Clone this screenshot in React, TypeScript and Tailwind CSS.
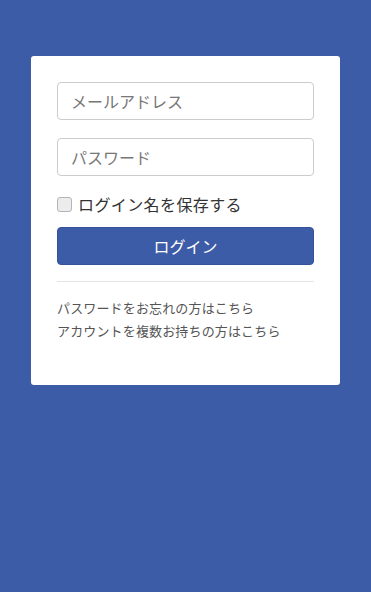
import React from "react";

export default function App() {
  return (
    <div
      className="min-h-[592px] w-full bg-[#3c5ca8] pt-[56px] px-[31px]"
      style={{ fontFamily: '"Noto Sans CJK JP", "Noto Sans", sans-serif' }}
    >
      <div className="bg-white rounded-[3px] px-[26px] pt-[26px] pb-[43px]">
        <div className="flex h-[38px] items-center rounded-[4px] border border-[#cccccc] px-[13px] text-[16px] text-[#777]">
          メールアドレス
        </div>
        <div className="mt-[18px] flex h-[38px] items-center rounded-[4px] border border-[#cccccc] px-[13px] text-[16px] text-[#777]">
          パスワード
        </div>
        <div className="mt-[16px] flex items-center gap-[6px] text-[16px] text-[#333]">
          <span className="inline-block h-[15px] w-[15px] rounded-[3px] border border-[#b5b5b5] bg-[#ececec]" />
          <span className="leading-[24px] tracking-[0.4px]">ログイン名を保存する</span>
        </div>
        <div className="mt-[11px] flex h-[38px] items-center justify-center rounded-[4px] bg-[#3c5ca8] border border-[#34529a] text-[16px] text-white">
          ログイン
        </div>
        <div className="mt-[16px] h-px bg-[#e5e5e5]" />
        <div className="mt-[14px] text-[13px] leading-[23px] tracking-[0.15px] text-[#555]">
          <div>パスワードをお忘れの方はこちら</div>
          <div>アカウントを複数お持ちの方はこちら</div>
        </div>
      </div>
    </div>
  );
}
